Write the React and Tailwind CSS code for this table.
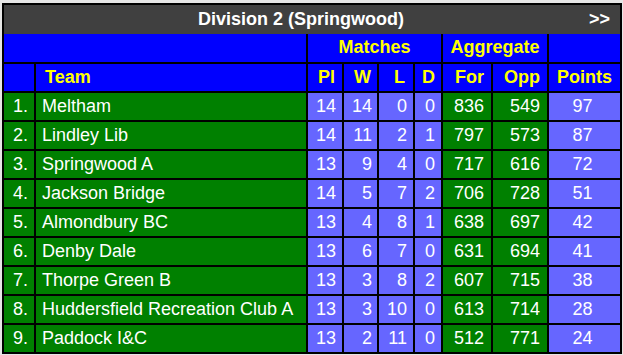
const ROWS = [
  { pos: 1, team: "Meltham", pl: 14, w: 14, l: 0, d: 0, f: 836, a: 549, pts: 97 },
  { pos: 2, team: "Lindley Lib", pl: 14, w: 11, l: 2, d: 1, f: 797, a: 573, pts: 87 },
  { pos: 3, team: "Springwood A", pl: 13, w: 9, l: 4, d: 0, f: 717, a: 616, pts: 72 },
  { pos: 4, team: "Jackson Bridge", pl: 14, w: 5, l: 7, d: 2, f: 706, a: 728, pts: 51 },
  { pos: 5, team: "Almondbury BC", pl: 13, w: 4, l: 8, d: 1, f: 638, a: 697, pts: 42 },
  { pos: 6, team: "Denby Dale", pl: 13, w: 6, l: 7, d: 0, f: 631, a: 694, pts: 41 },
  { pos: 7, team: "Thorpe Green B", pl: 13, w: 3, l: 8, d: 2, f: 607, a: 715, pts: 38 },
  { pos: 8, team: "Huddersfield Recreation Club A", pl: 13, w: 3, l: 10, d: 0, f: 613, a: 714, pts: 28 },
  { pos: 9, team: "Paddock I&C", pl: 13, w: 2, l: 11, d: 0, f: 512, a: 771, pts: 24 },
];

const blue = "bg-[#0000ff] text-[#ffff00] font-bold flex items-center pb-[2px]";
const lilac = "bg-[#6666ff] flex items-center pb-[2px]";
const green = "bg-[#008000] flex items-center pb-[2px]";

export default function App() {
  return (
    <div className="w-[623px] h-[355px] bg-[#e6e6e6] pt-[3px] pl-[2px] font-[family-name:'Liberation_Sans',Arial,sans-serif] text-[18px] leading-none text-white">
      <div className="w-[620px] border-2 border-black">
        {/* Title bar */}
        <div className="h-[29px] bg-[#404040] flex items-center font-bold pb-[2px]">
          <div className="flex-1 text-center pl-[9px]">Division 2 (Springwood)</div>
          <div className="pr-[10px]">&gt;&gt;</div>
        </div>

        <div className="grid grid-cols-[30px_270px_34px_33px_34px_26px_48px_54px_71px] gap-[2px] bg-black">
          {/* Group header */}
          <div className={`${blue} col-span-2 h-[28px]`} />
          <div className={`${blue} col-span-4 justify-center`}>Matches</div>
          <div className={`${blue} col-span-2 justify-center`}>Aggregate</div>
          <div className={blue} />

          {/* Column header */}
          <div className={`${blue} h-[27px]`} />
          <div className={`${blue} pl-[9px]`}>Team</div>
          <div className={`${blue} justify-end pr-[7px]`}>Pl</div>
          <div className={`${blue} justify-end pr-[6px]`}>W</div>
          <div className={`${blue} justify-end pr-[8px]`}>L</div>
          <div className={`${blue} justify-end pr-[6px]`}>D</div>
          <div className={`${blue} justify-end pr-[7px]`}>For</div>
          <div className={`${blue} justify-end pr-[7px]`}>Opp</div>
          <div className={`${blue} justify-center`}>Points</div>

          {ROWS.map((r) => (
            <div key={r.pos} className="contents">
              <div className={`${green} h-[27px] justify-end pr-[6px]`}>{r.pos}.</div>
              <div className={`${green} pl-[6px]`}>{r.team}</div>
              <div className={`${lilac} justify-end pr-[6px]`}>{r.pl}</div>
              <div className={`${lilac} justify-end pr-[5px]`}>{r.w}</div>
              <div className={`${lilac} justify-end pr-[6px]`}>{r.l}</div>
              <div className={`${lilac} justify-end pr-[6px]`}>{r.d}</div>
              <div className={`${green} justify-end pr-[7px]`}>{r.f}</div>
              <div className={`${green} justify-end pr-[7px]`}>{r.a}</div>
              <div className={`${lilac} justify-center pr-[4px]`}>{r.pts}</div>
            </div>
          ))}
        </div>
      </div>
    </div>
  );
}
